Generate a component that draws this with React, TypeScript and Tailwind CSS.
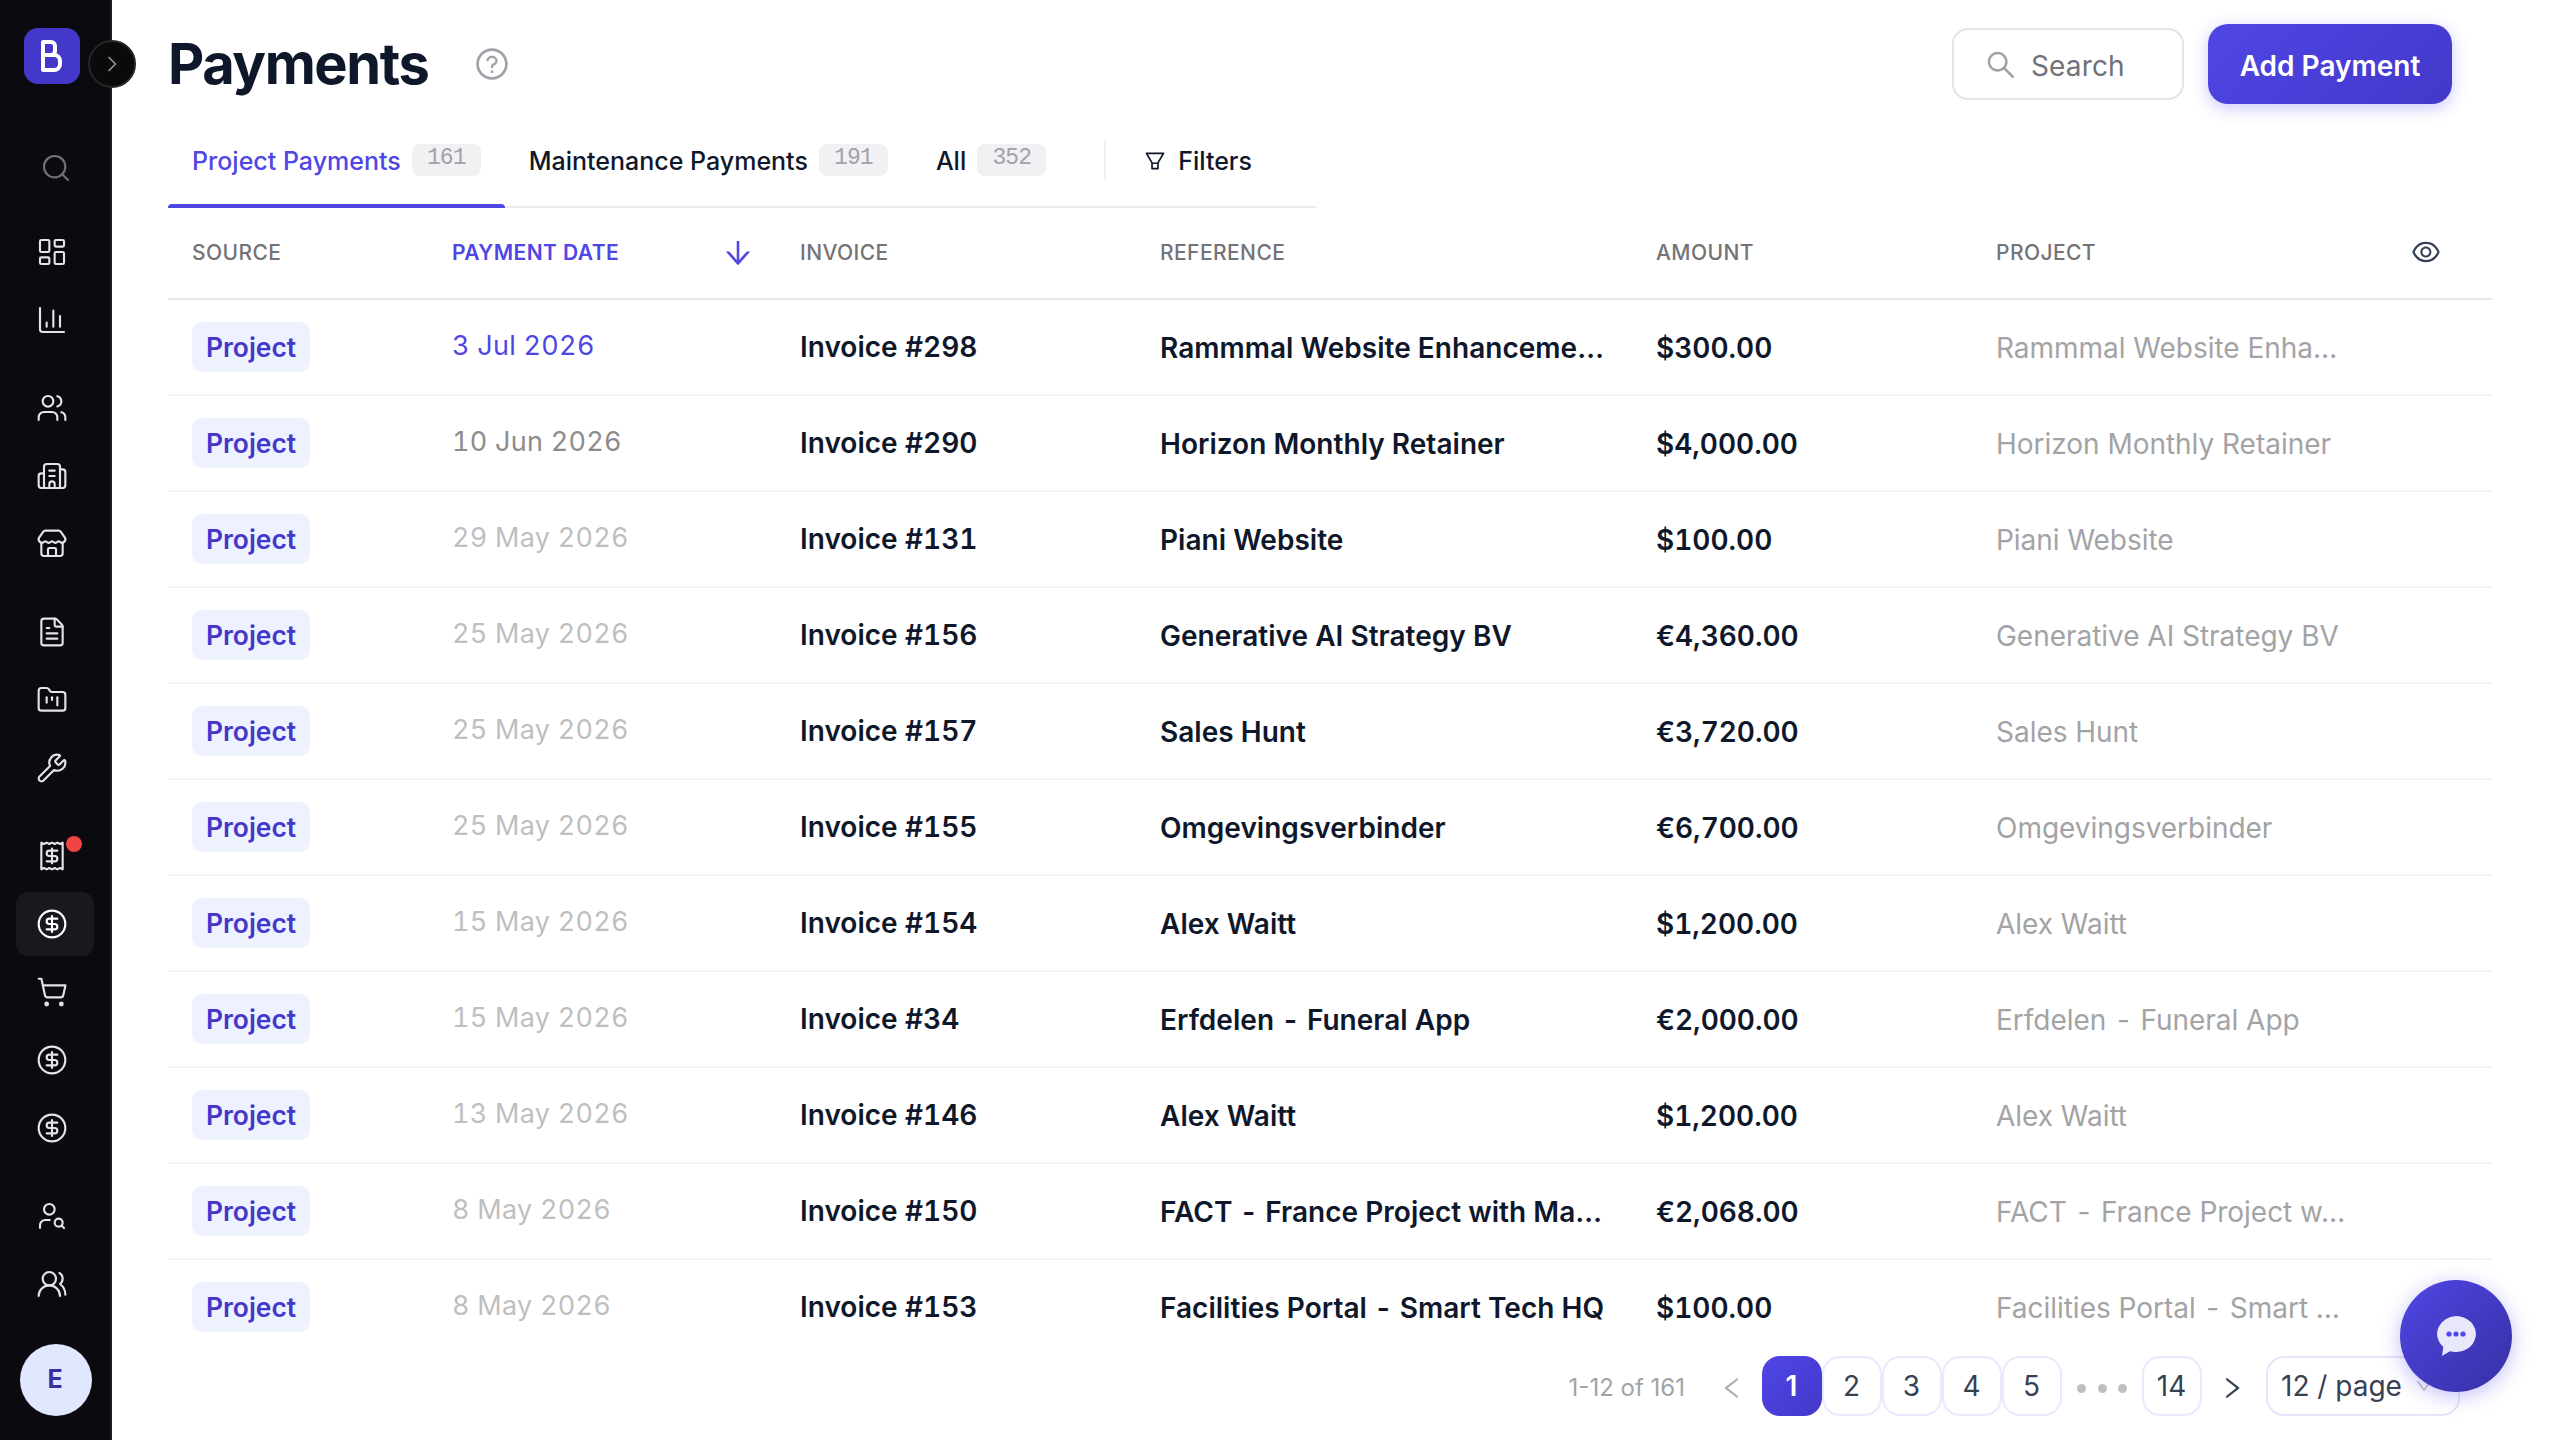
import { Fragment, type ReactNode } from "react"
import {
  Building2,
  ChartColumn,
  CircleDollarSign,
  FileText,
  FolderKanban,
  LayoutDashboard,
  Receipt,
  Search,
  ShoppingCart,
  Store,
  UserSearch,
  Users,
  UsersRound,
  Wrench,
  type LucideIcon,
} from "lucide-react"
import {
  AiOutlineArrowDown,
  AiOutlineDown,
  AiOutlineEye,
  AiOutlineFilter,
  AiOutlineLeft,
  AiOutlineQuestionCircle,
  AiOutlineRight,
  AiOutlineSearch,
} from "react-icons/ai"

interface NavItem {
  icon: LucideIcon
  active?: boolean
  hasAlert?: boolean
}

interface Payment {
  date: string
  dateColor: string
  invoice: string
  reference: string
  amount: string
  project: string
}

const navGroups: NavItem[][] = [
  [{ icon: LayoutDashboard }, { icon: ChartColumn }],
  [{ icon: Users }, { icon: Building2 }, { icon: Store }],
  [{ icon: FileText }, { icon: FolderKanban }, { icon: Wrench }],
  [
    { icon: Receipt, hasAlert: true },
    { icon: CircleDollarSign, active: true },
    { icon: ShoppingCart },
    { icon: CircleDollarSign },
    { icon: CircleDollarSign },
  ],
  [{ icon: UserSearch }, { icon: UsersRound }],
]

const payments: Payment[] = [
  { date: "3 Jul 2026", dateColor: "text-[#4f46e5]", invoice: "Invoice #298", reference: "Rammmal Website Enhanceme…", amount: "$300.00", project: "Rammmal Website Enha…" },
  { date: "10 Jun 2026", dateColor: "text-[#8c8c8c]", invoice: "Invoice #290", reference: "Horizon Monthly Retainer", amount: "$4,000.00", project: "Horizon Monthly Retainer" },
  { date: "29 May 2026", dateColor: "text-[#bfbfbf]", invoice: "Invoice #131", reference: "Piani Website", amount: "$100.00", project: "Piani Website" },
  { date: "25 May 2026", dateColor: "text-[#bfbfbf]", invoice: "Invoice #156", reference: "Generative AI Strategy BV", amount: "€4,360.00", project: "Generative AI Strategy BV" },
  { date: "25 May 2026", dateColor: "text-[#bfbfbf]", invoice: "Invoice #157", reference: "Sales Hunt", amount: "€3,720.00", project: "Sales Hunt" },
  { date: "25 May 2026", dateColor: "text-[#bfbfbf]", invoice: "Invoice #155", reference: "Omgevingsverbinder", amount: "€6,700.00", project: "Omgevingsverbinder" },
  { date: "15 May 2026", dateColor: "text-[#bfbfbf]", invoice: "Invoice #154", reference: "Alex Waitt", amount: "$1,200.00", project: "Alex Waitt" },
  { date: "15 May 2026", dateColor: "text-[#bfbfbf]", invoice: "Invoice #34", reference: "Erfdelen - Funeral App", amount: "€2,000.00", project: "Erfdelen - Funeral App" },
  { date: "13 May 2026", dateColor: "text-[#bfbfbf]", invoice: "Invoice #146", reference: "Alex Waitt", amount: "$1,200.00", project: "Alex Waitt" },
  { date: "8 May 2026", dateColor: "text-[#bfbfbf]", invoice: "Invoice #150", reference: "FACT - France Project with Ma…", amount: "€2,068.00", project: "FACT - France Project w…" },
  { date: "8 May 2026", dateColor: "text-[#bfbfbf]", invoice: "Invoice #153", reference: "Facilities Portal - Smart Tech HQ", amount: "$100.00", project: "Facilities Portal - Smart …" },
]

const rowGrid = "grid grid-cols-[260px_348px_360px_496px_340px_400px_120px] items-center"

function Sidebar() {
  return (
    <aside className="relative flex w-28 shrink-0 flex-col border-r-2 border-[#1f1f22] bg-[#0a0a0f]">
      <div className="ml-6 mt-7 flex size-14 items-center justify-center rounded-[14px] bg-[#4338ca]">
        <svg viewBox="0 0 24 34" className="h-[34px] w-6" fill="none" stroke="white" strokeWidth="4" strokeLinejoin="round">
          <path d="M3 3h8a4 4 0 0 1 4 4v5a4 4 0 0 1-4 4H3zM3 16h11a6 6 0 0 1 6 6v3a6 6 0 0 1-6 6H3z" />
        </svg>
      </div>
      <button className="absolute left-[88px] top-10 z-10 flex size-12 items-center justify-center rounded-full border-2 border-[#27272a] bg-[#0a0a0b]">
        <svg viewBox="0 0 10 16" className="h-4 w-2.5" fill="none" stroke="#a1a1aa" strokeWidth="1.4">
          <path d="m1.5 1 7 7-7 7" />
        </svg>
      </button>
      <Search className="ml-10 mt-[68px] size-8 text-[#71717a]" strokeWidth={1.6} />
      <nav className="mt-9 flex flex-col gap-6">
        {navGroups.map((group, i) => (
          <div key={i} className="flex flex-col gap-1">
            {group.map(({ icon: Icon, active, hasAlert }, j) => (
              <div
                key={j}
                className={`relative ml-4 flex h-16 w-[78px] items-center rounded-xl pl-5 ${active ? "bg-[#18181f] text-white" : "text-[#e4e4e7]"}`}
              >
                <Icon className="size-8" strokeWidth={1.6} />
                {hasAlert && <span className="absolute left-[50px] top-3 size-4 rounded-full bg-[#ef4444]" />}
              </div>
            ))}
          </div>
        ))}
      </nav>
      <div className="ml-5 mt-7 flex size-[72px] items-center justify-center rounded-full bg-[#e0e7ff] pr-0.5 text-[25px] font-bold text-[#3730a3]">
        E
      </div>
    </aside>
  )
}

function Header() {
  return (
    <header className="mr-10 flex h-32 items-center justify-between">
      <div className="flex items-center">
        <h1 className="text-[56px] font-bold leading-none tracking-[-0.025em] text-[#0f172a]">Payments</h1>
        <AiOutlineQuestionCircle className="ml-[46px] size-9 text-[#a1a1aa]" />
      </div>
      <div className="flex items-center gap-6">
        <button className="flex h-[72px] w-[232px] items-center rounded-2xl border-2 border-[#e4e4e7] bg-white pl-[30px] pt-0.5">
          <AiOutlineSearch className="mr-[13px] size-[34px] text-[#a1a1aa]" />
          <span className="pt-0.5 text-[28px] tracking-[0.005em] text-[#71717a]">Search</span>
        </button>
        <button className="h-20 w-[244px] rounded-[20px] bg-linear-135 from-[#4f46e5] to-[#4338ca] pt-1 text-[28px] font-semibold text-white shadow-[0_4px_16px_rgba(79,70,229,0.3)]">
          Add Payment
        </button>
      </div>
    </header>
  )
}

function Tab({ label, count, active }: { label: string; count: string; active?: boolean }) {
  return (
    <div className={`relative flex h-20 items-start gap-[11px] px-6 ${active ? "text-[#4f46e5]" : "text-[#0f172a]"}`}>
      <span className="mt-[17px] text-[25px] font-medium leading-8">{label}</span>
      <span className="mt-4 flex h-8 w-[69px] items-center justify-center rounded-lg bg-[#f1f1f3] pb-[3px] font-[Liberation_Mono,monospace] text-[23px] tracking-[-0.04em] text-[#a1a1aa]">
        {count}
      </span>
      {active && <span className="absolute inset-x-0 bottom-0 h-1 rounded-t bg-[#4f46e5]" />}
    </div>
  )
}

function Tabs() {
  return (
    <div className="flex h-20 w-[1148px] border-b-2 border-[#ececee]">
      <Tab label="Project Payments" count="161" active />
      <Tab label="Maintenance Payments" count="191" />
      <Tab label="All" count="352" />
      <div className="ml-[34px] mt-3 h-10 w-0.5 bg-[#f0f0f0]" />
      <div className="ml-[37px] mt-[17px] flex h-8 items-center gap-[11px] text-[25px] font-medium leading-8 text-[#0f172a]">
        <AiOutlineFilter className="size-6" />
        Filters
      </div>
    </div>
  )
}

function HeaderCell({ children }: { children: ReactNode }) {
  return <div className="px-6">{children}</div>
}

// Gives the separator dash in a project name some extra room
function ProjectName({ name }: { name: string }) {
  return name.split(" - ").map((part, i) => (
    <Fragment key={i}>
      {i > 0 && <span className="mx-[0.1em]"> - </span>}
      {part}
    </Fragment>
  ))
}

function PaymentsTable() {
  return (
    <div className="h-[1126px] overflow-hidden">
      <div className={`${rowGrid} h-[92px] border-b-2 border-[#e8e8ea] text-[21px] font-medium tracking-[0.02em] text-[#737378]`}>
        <HeaderCell>SOURCE</HeaderCell>
        <div className="flex items-center justify-between pl-6 pr-[21px] font-semibold text-[#4f46e5]">
          PAYMENT DATE
          <AiOutlineArrowDown className="-my-1 size-[34px]" />
        </div>
        <HeaderCell>INVOICE</HeaderCell>
        <HeaderCell>REFERENCE</HeaderCell>
        <HeaderCell>AMOUNT</HeaderCell>
        <HeaderCell>PROJECT</HeaderCell>
        <AiOutlineEye className="mb-0.5 ml-[38px] size-8 text-[#334155]" />
      </div>
      {payments.map((payment) => (
        <div key={payment.invoice} className={`${rowGrid} h-24 border-b-2 border-[#f4f4f5] text-[28px] text-[#0f172a]`}>
          <div className="px-6">
            <span className="flex h-[50px] w-[118px] items-center justify-center rounded-[10px] bg-[#eef2ff] text-[26.4px] font-semibold leading-[50px] text-[#4338ca]">
              Project
            </span>
          </div>
          <div className={`px-6 pb-px text-[27px] tracking-[0.01em] tabular-nums ${payment.dateColor}`}>{payment.date}</div>
          <div className="px-6 pb-px font-semibold tabular-nums">{payment.invoice}</div>
          <div className="whitespace-nowrap pl-6 pt-0.5 font-semibold tracking-[0.001em]">
            <ProjectName name={payment.reference} />
          </div>
          <div className="px-6 pt-0.5 font-semibold tabular-nums">{payment.amount}</div>
          <div className="whitespace-nowrap pl-6 pt-0.5 tracking-[-0.001em] text-[#a3a3a6]">
            <ProjectName name={payment.project} />
          </div>
        </div>
      ))}
    </div>
  )
}

function Pagination() {
  return (
    <div className="mr-8 mt-[22px] flex h-[60px] items-center justify-end text-[28px] text-[#374151]">
      <span className="mr-[33px] pt-[3px] text-2xl text-[#a3a3a6]">1-12 of 161</span>
      <AiOutlineLeft className="mr-4 mt-1 size-7 text-[#b0b0b4]" />
      <span className="flex size-[60px] items-center justify-center rounded-[18px] bg-linear-135 from-[#4f46e5] to-[#4338ca] pr-px font-semibold text-white">
        1
      </span>
      {["2", "3", "4", "5"].map((page) => (
        <span key={page} className="flex size-[60px] items-center justify-center rounded-[18px] border-2 border-[#ebe9fe] pr-px">
          {page}
        </span>
      ))}
      <span className="mx-[15px] mt-1 flex w-[50px] justify-between">
        <span className="size-[9px] rounded-full bg-[#bfbfbf]" />
        <span className="size-[9px] rounded-full bg-[#bfbfbf]" />
        <span className="size-[9px] rounded-full bg-[#bfbfbf]" />
      </span>
      <span className="flex size-[60px] items-center justify-center rounded-[18px] border-2 border-[#ebe9fe] pr-px">14</span>
      <AiOutlineRight className="ml-4 mr-5 mt-1 size-7" />
      <span className="flex h-[60px] w-[194px] items-center justify-between rounded-[18px] border-2 border-[#e6e5fc] px-[13px]">
        12 / page
        <AiOutlineDown className="mr-[11px] size-5 text-[#bfbfbf]" />
      </span>
    </div>
  )
}

function ChatButton() {
  return (
    <button className="absolute left-[2400px] top-[1280px] flex size-28 items-center justify-center rounded-full bg-linear-135 from-[#4f46e5] to-[#3730a3] shadow-[0_4px_20px_rgba(79,70,229,0.35)]">
      <svg viewBox="0 0 40 40" className="size-10">
        <path d="M20 0a20 18 0 1 1-6 35.2L6 40l1.3-9A20 18 0 0 1 20 0z" fill="#e9e7fa" />
        <circle cx="13" cy="18" r="2.6" fill="#4f46e5" />
        <circle cx="20" cy="18" r="2.6" fill="#4f46e5" />
        <circle cx="27" cy="18" r="2.6" fill="#4f46e5" />
      </svg>
    </button>
  )
}

export default function App() {
  return (
    <div className="relative flex h-[1440px] w-[2560px] overflow-hidden bg-white font-[Inter,sans-serif]">
      <Sidebar />
      <main className="ml-14 w-[2324px]">
        <Header />
        <Tabs />
        <PaymentsTable />
        <Pagination />
      </main>
      <ChatButton />
    </div>
  )
}
